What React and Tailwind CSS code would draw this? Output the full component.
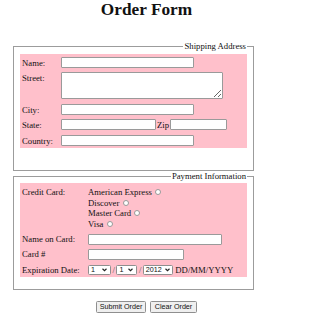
export default function App() {
  return (
    <div className="w-[264px] h-[320px] overflow-hidden bg-white text-[#111] font-['Liberation_Serif','Times_New_Roman',serif] text-[8.7px] leading-[10px]">
      <h1 className="mt-[1px] h-[17px] pl-[29px] text-center text-[17.3px] font-bold leading-none">Order Form</h1>

      <fieldset className="mt-[23px] ml-[13px] w-[241px] border border-[#9c9c9c] px-[6px] pt-[3px] pb-[22px]">
        <legend align="right" className="ml-auto px-[1px] leading-[10px]">Shipping Address</legend>
        <div className="bg-[#ffc0cb] pt-[3px] pb-[2px]">
          <div className="flex items-center h-[11px]">
            <span className="w-[41px] pl-[2px]">Name:</span>
            <input readOnly className="w-[133px] h-[11px] border border-[#9a9a9a] rounded-[1px] bg-white" />
          </div>
          <div className="flex items-start mt-[4px]">
            <span className="w-[41px] pl-[2px] pt-[1px]">Street:</span>
            <textarea readOnly className="block w-[162px] h-[27px] border border-[#9a9a9a] rounded-[1px] bg-white" />
          </div>
          <div className="flex items-center h-[11px] mt-[5px]">
            <span className="w-[41px] pl-[2px]">City:</span>
            <input readOnly className="w-[133px] h-[11px] border border-[#9a9a9a] rounded-[1px] bg-white" />
          </div>
          <div className="flex items-center h-[11px] mt-[4px]">
            <span className="w-[41px] pl-[2px]">State:</span>
            <input readOnly className="w-[95px] h-[11px] border border-[#9a9a9a] rounded-[1px] bg-white" />
            <span className="ml-[1px]">Zip</span>
            <input readOnly className="ml-[1px] w-[57px] h-[11px] border border-[#9a9a9a] rounded-[1px] bg-white" />
          </div>
          <div className="flex items-center h-[11px] mt-[5px]">
            <span className="w-[41px] pl-[2px]">Country:</span>
            <input readOnly className="w-[133px] h-[11px] border border-[#9a9a9a] rounded-[1px] bg-white" />
          </div>
        </div>
      </fieldset>

      <fieldset className="ml-[13px] w-[241px] border border-[#9c9c9c] px-[6px] pt-[2px] pb-[12px]">
        <legend align="right" className="ml-auto px-[1px] leading-[10px]">Payment Information</legend>
        <div className="bg-[#ffc0cb] pt-[4px] pb-[2px]">
          <div className="flex">
            <span className="w-[68px] pl-[2px] leading-[10.67px]">Credit Card:</span>
            <div className="flex flex-col leading-[10.67px]">
              <div>American Express <span className="inline-block w-[6px] h-[6px] rounded-full border border-[#999] bg-white align-[0px] ml-[1px]" /></div>
              <div>Discover <span className="inline-block w-[6px] h-[6px] rounded-full border border-[#999] bg-white align-[0px] ml-[1px]" /></div>
              <div>Master Card <span className="inline-block w-[6px] h-[6px] rounded-full border border-[#999] bg-white align-[0px] ml-[1px]" /></div>
              <div>Visa <span className="inline-block w-[6px] h-[6px] rounded-full border border-[#999] bg-white align-[0px] ml-[1px]" /></div>
            </div>
          </div>
          <div className="flex items-center h-[11px] mt-[4px]">
            <span className="w-[68px] pl-[2px]">Name on Card:</span>
            <input readOnly className="w-[134px] h-[11px] border border-[#9a9a9a] rounded-[1px] bg-white" />
          </div>
          <div className="flex items-center h-[11px] mt-[4px]">
            <span className="w-[68px] pl-[2px]">Card #</span>
            <input readOnly className="w-[96px] h-[11px] border border-[#9a9a9a] rounded-[1px] bg-white" />
          </div>
          <div className="flex items-center h-[10px] mt-[5px]">
            <span className="w-[68px] pl-[2px]">Expiration Date:</span>
            <div className="flex items-center justify-between h-[10px] w-[23px] border border-[#8f8f8f] rounded-[1.5px] bg-white pl-[2px] pr-[3px] font-['Liberation_Sans',Arial,sans-serif] text-[7.2px] leading-none">
              <span>1</span>
              <svg width="5" height="4" viewBox="0 0 10 8"><path d="M1 1.5 L5 5.5 L9 1.5" stroke="#222" strokeWidth="2.2" fill="none" /></svg>
            </div>
            <span className="px-[1.5px] text-[#555]">/</span>
            <div className="flex items-center justify-between h-[10px] w-[21px] border border-[#8f8f8f] rounded-[1.5px] bg-white pl-[2px] pr-[3px] font-['Liberation_Sans',Arial,sans-serif] text-[7.2px] leading-none">
              <span>1</span>
              <svg width="5" height="4" viewBox="0 0 10 8"><path d="M1 1.5 L5 5.5 L9 1.5" stroke="#222" strokeWidth="2.2" fill="none" /></svg>
            </div>
            <span className="px-[1.5px] text-[#555]">/</span>
            <div className="flex items-center justify-between h-[10px] w-[30px] border border-[#8f8f8f] rounded-[1.5px] bg-white pl-[2px] pr-[2px] font-['Liberation_Sans',Arial,sans-serif] text-[7.2px] leading-none">
              <span>2012</span>
              <svg width="5" height="4" viewBox="0 0 10 8"><path d="M1 1.5 L5 5.5 L9 1.5" stroke="#222" strokeWidth="2.2" fill="none" /></svg>
            </div>
            <span className="ml-[2.5px]">DD/MM/YYYY</span>
          </div>
        </div>
      </fieldset>

      <div className="mt-[11px] pl-[29px] flex justify-center gap-[4px]">
        <button className="w-[50px] h-[12px] border border-[#8f8f8f] rounded-[1.5px] bg-[#efefef] font-['Liberation_Sans',Arial,sans-serif] text-[7.2px] leading-none text-[#111]">Submit Order</button>
        <button className="w-[47px] h-[12px] border border-[#8f8f8f] rounded-[1.5px] bg-[#efefef] font-['Liberation_Sans',Arial,sans-serif] text-[7.2px] leading-none text-[#111]">Clear Order</button>
      </div>
    </div>
  );
}
